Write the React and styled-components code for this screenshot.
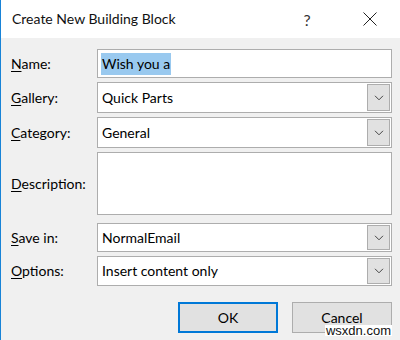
import React from 'react';
import styled, { createGlobalStyle } from 'styled-components';

const GlobalStyle = createGlobalStyle`
  html, body {
    margin: 0;
    padding: 0;
    background: #f0f0f0;
  }
  body {
    font-family: Lato, 'Noto Sans', sans-serif;
    color: #000;
  }
`;

const Dialog = styled('div')`
  position: relative;
  width: 400px;
  height: 340px;
  box-sizing: border-box;
  border-left: 1px solid #1883d7;
  background: #f0f0f0;
  overflow: hidden;
`;

const TitleBar = styled('div')`
  display: flex;
  align-items: center;
  height: 38px;
  padding: 0 0 0 11px;
  background: #fff;
  font-size: 14px;
`;

const Title = styled('div')`
  flex: 1;
  padding-bottom: 1px;
  color: #111;
`;

const TitleButton = styled('div')`
  display: flex;
  align-items: center;
  justify-content: center;
  width: ${p => p.w}px;
  height: 38px;
  font-size: 16px;
  color: #333;
`;

const Body = styled('div')`
  display: flex;
  flex-direction: column;
  gap: 4px;
  padding: 11px 8px 0 10px;
`;

const Row = styled('div')`
  display: flex;
  align-items: center;
  height: ${p => p.h}px;
  margin-top: ${p => p.extra || 0}px;
`;

const Label = styled('div')`
  width: 86px;
  font-size: 14px;
  padding-bottom: 1px;

  u {
    text-decoration: underline;
    text-underline-offset: 2px;
  }
`;

const Field = styled('div')`
  flex: 1;
  display: flex;
  align-items: center;
  height: 100%;
  box-sizing: border-box;
  border: 1px solid #adadad;
  background: #fff;
  padding: 0 1px 0 4px;
  font-size: 14px;
`;

const Value = styled('span')`
  flex: 1;
  padding-bottom: 1px;
`;

const Selected = styled('span')`
  background: #99c9ef;
  padding: 2px 1px 3px 1px;
  margin-left: -1px;
`;

const DropButton = styled('div')`
  display: flex;
  align-items: center;
  justify-content: center;
  width: 23px;
  height: calc(100% - 2px);
  box-sizing: border-box;
  border: 1px solid #adadad;
  background: #e1e1e1;
`;

const ButtonRow = styled('div')`
  display: flex;
  justify-content: flex-end;
  gap: 14px;
  padding: 12px 0 0 0;
`;

const Button = styled('div')`
  display: flex;
  align-items: center;
  justify-content: center;
  width: 100px;
  height: 31px;
  box-sizing: border-box;
  border: ${p => (p.primary ? '2px solid #0078d7' : '1px solid #adadad')};
  background: #e1e1e1;
  font-size: 14px;
  padding-bottom: 1px;
`;

const Watermark = styled('div')`
  position: absolute;
  right: 8px;
  bottom: 4px;
  background: #fff;
  font-family: 'Liberation Sans', Arial, sans-serif;
  font-size: 13px;
  line-height: 11px;
  padding: 0 1px;
  color: #111;
`;

const Chevron = () => (
  <svg width="10" height="6" viewBox="0 0 10 6">
    <path d="M1 0.8 L5 4.8 L9 0.8" fill="none" stroke="#444" strokeWidth="1" />
  </svg>
);

const CloseIcon = () => (
  <svg width="14" height="14" viewBox="0 0 14 14">
    <path d="M0.5 0.5 L13.5 13.5 M13.5 0.5 L0.5 13.5" stroke="#222" strokeWidth="1" />
  </svg>
);

const rows = [
  { key: 'N', rest: 'ame:', value: 'Wish you a', h: 29, text: true },
  { key: 'G', rest: 'allery:', value: 'Quick Parts', h: 31, drop: true },
  { key: 'C', rest: 'ategory:', value: 'General', h: 31, drop: true },
  { key: 'D', rest: 'escription:', value: '', h: 63 },
  { key: 'S', rest: 'ave in:', value: 'NormalEmail', h: 29, drop: true, extra: 4 },
  { key: 'O', rest: 'ptions:', value: 'Insert content only', h: 30, drop: true },
];

export default function App() {
  return (
    <Dialog>
      <GlobalStyle />
      <TitleBar>
        <Title>Create New Building Block</Title>
        <TitleButton w={36}>?</TitleButton>
        <TitleButton w={31} />
        <TitleButton w={28}><CloseIcon /></TitleButton>
        <TitleButton w={16} />
      </TitleBar>
      <Body>
        {rows.map(r => (
          <Row key={r.key} h={r.h} extra={r.extra}>
            <Label><u>{r.key}</u>{r.rest}</Label>
            <Field>
              <Value>{r.text ? <Selected>{r.value}</Selected> : r.value}</Value>
              {r.drop && <DropButton><Chevron /></DropButton>}
            </Field>
          </Row>
        ))}
        <ButtonRow>
          <Button primary>OK</Button>
          <Button>Cancel</Button>
        </ButtonRow>
      </Body>
      <Watermark>wsxdn.com</Watermark>
    </Dialog>
  );
}
